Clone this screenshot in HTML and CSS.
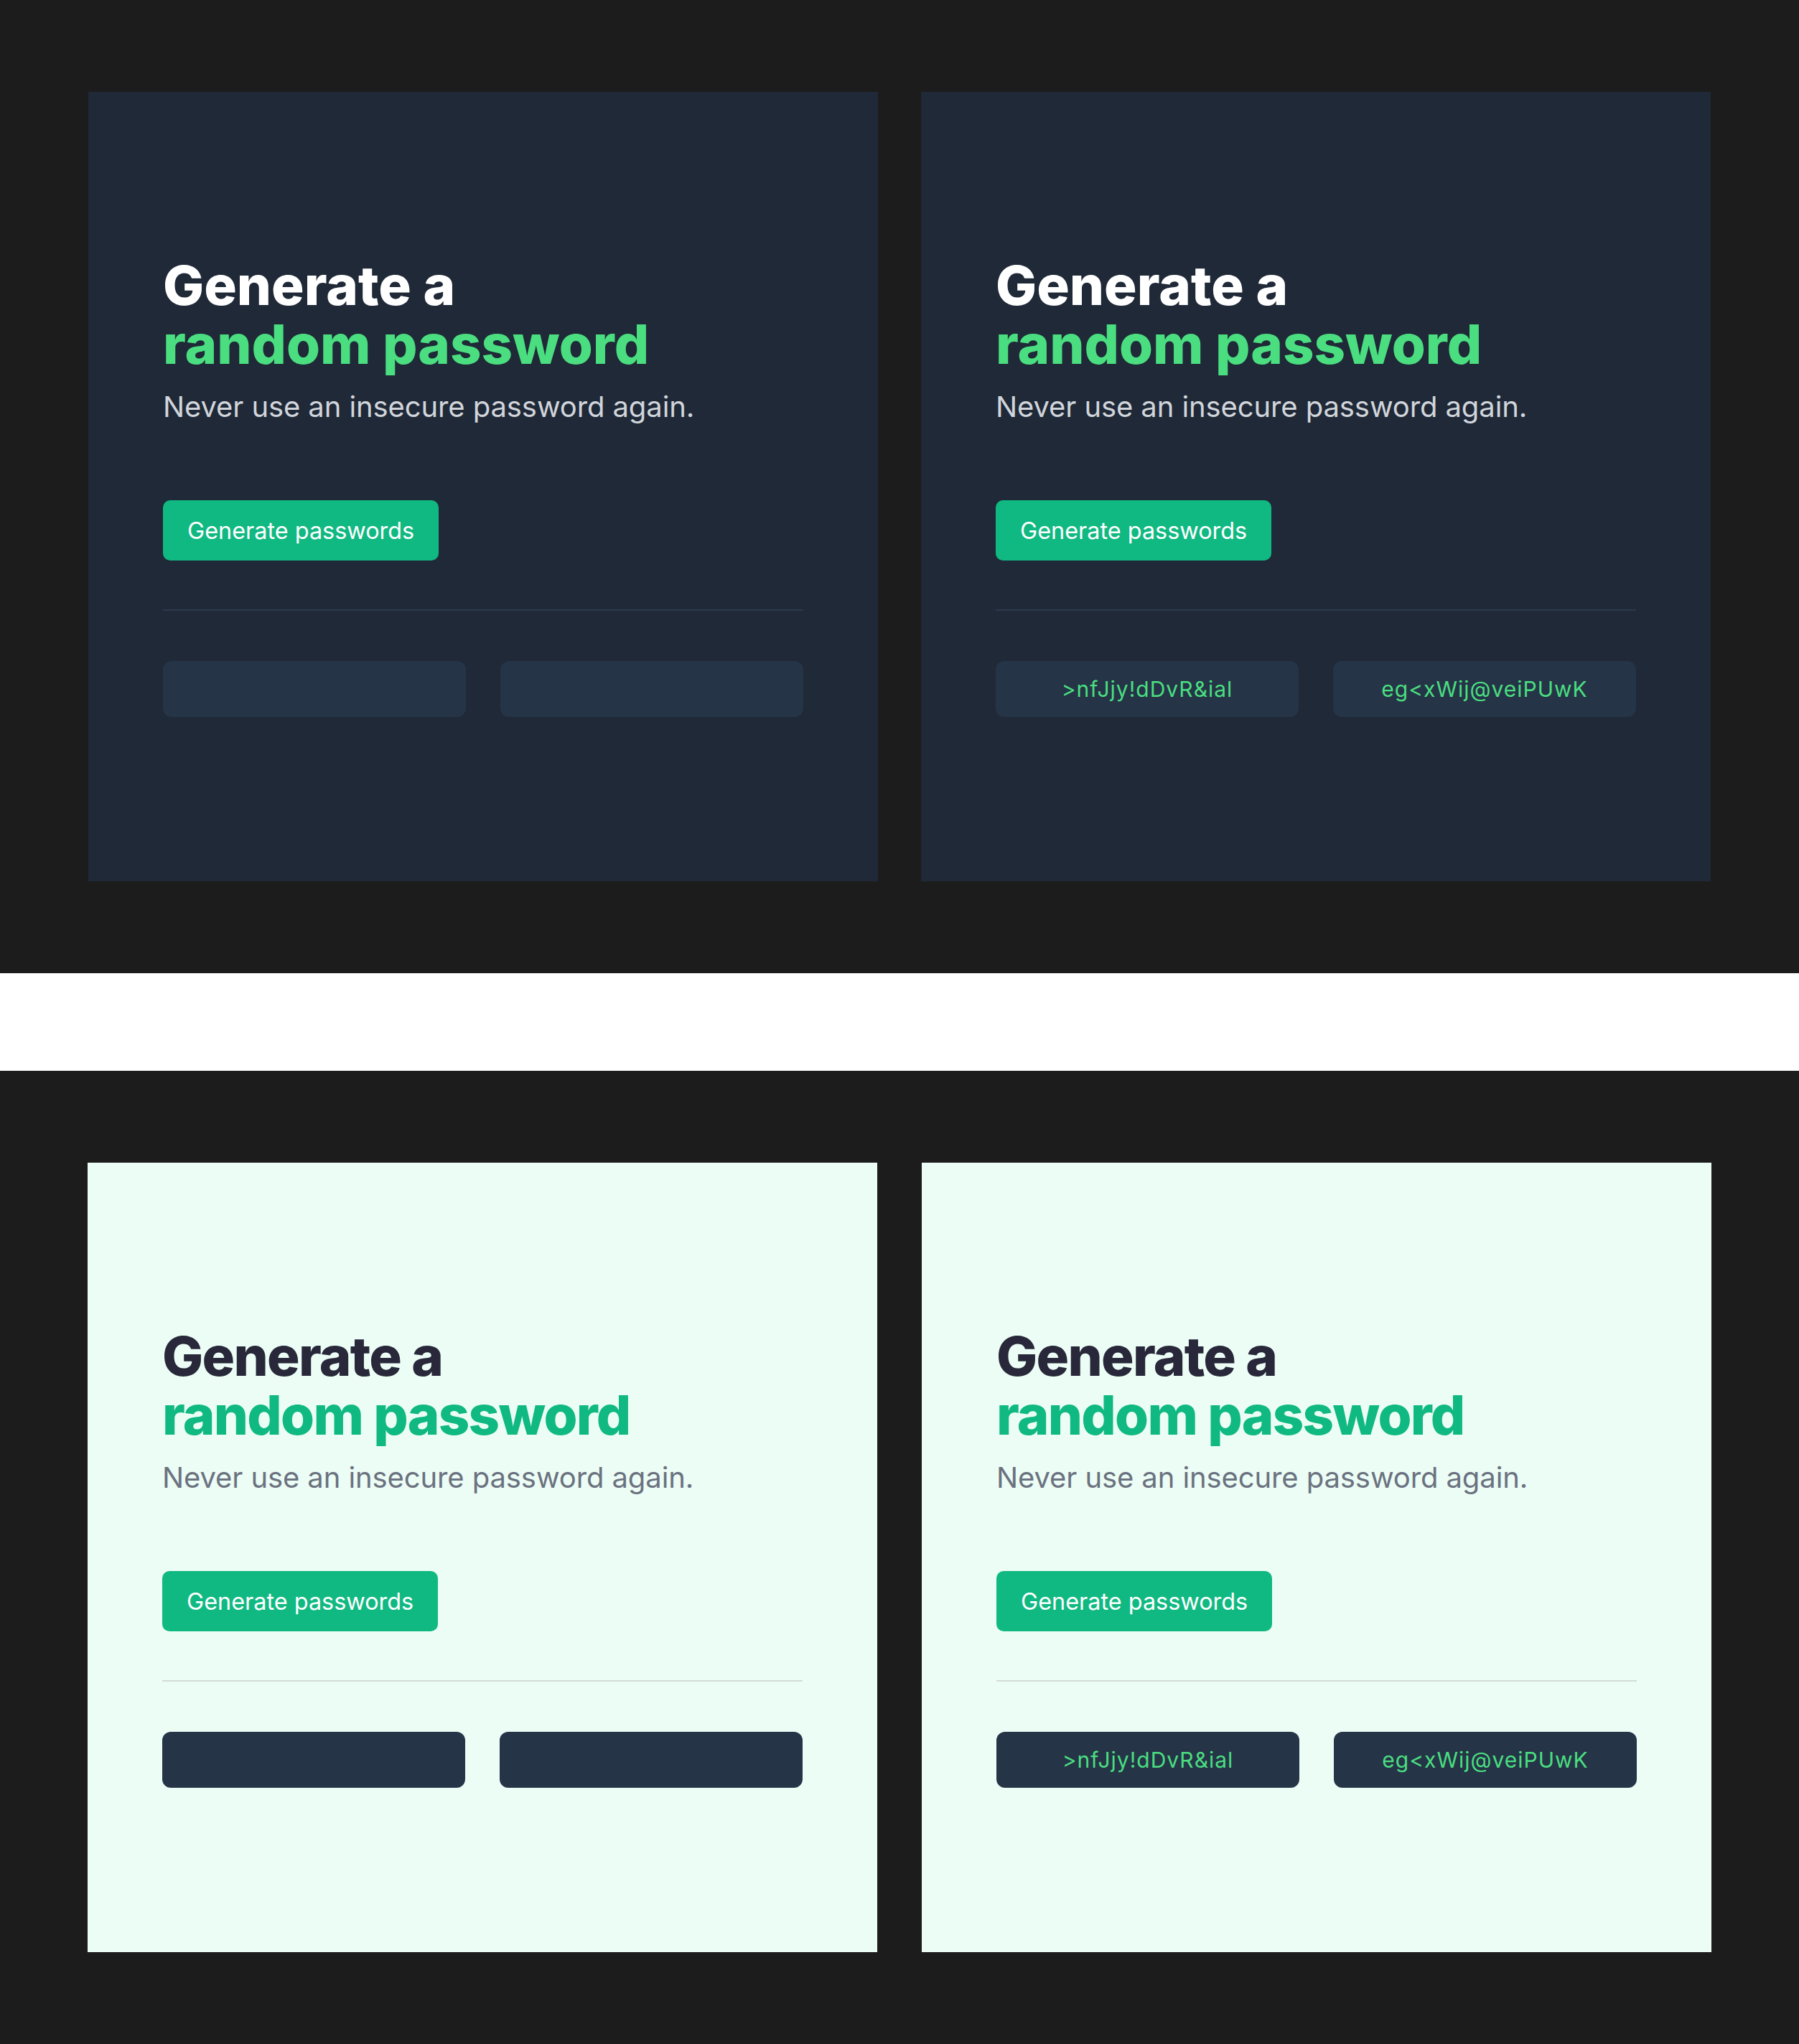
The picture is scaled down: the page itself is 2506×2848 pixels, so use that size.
FILE: index.html
```html
<!DOCTYPE html>
<html lang="en">
<head>
<meta charset="utf-8">
<title>Generate a random password</title>
<link rel="stylesheet" href="styles.css">
</head>
<body>
<section class="stage">
  <div class="card card--dark">
    <h1 class="title"><span class="title-main">Generate a</span><span class="title-accent">random password</span></h1>
    <p class="subtitle">Never use an insecure password again.</p>
    <button class="btn" type="button">Generate passwords</button>
    <hr class="divider">
    <div class="passwords">
      <div class="pw"></div>
      <div class="pw"></div>
    </div>
  </div>
  <div class="card card--dark">
    <h1 class="title"><span class="title-main">Generate a</span><span class="title-accent">random password</span></h1>
    <p class="subtitle">Never use an insecure password again.</p>
    <button class="btn" type="button">Generate passwords</button>
    <hr class="divider">
    <div class="passwords">
      <div class="pw">&gt;nfJjy!dDvR&amp;ial</div>
      <div class="pw">eg&lt;xWij@veiPUwK</div>
    </div>
  </div>
</section>
<div class="spacer"></div>
<section class="stage stage--light">
  <div class="card card--light">
    <h1 class="title"><span class="title-main">Generate a</span><span class="title-accent">random password</span></h1>
    <p class="subtitle">Never use an insecure password again.</p>
    <button class="btn" type="button">Generate passwords</button>
    <hr class="divider">
    <div class="passwords">
      <div class="pw"></div>
      <div class="pw"></div>
    </div>
  </div>
  <div class="card card--light">
    <h1 class="title"><span class="title-main">Generate a</span><span class="title-accent">random password</span></h1>
    <p class="subtitle">Never use an insecure password again.</p>
    <button class="btn" type="button">Generate passwords</button>
    <hr class="divider">
    <div class="passwords">
      <div class="pw">&gt;nfJjy!dDvR&amp;ial</div>
      <div class="pw">eg&lt;xWij@veiPUwK</div>
    </div>
  </div>
</section>
</body>
</html>
```

FILE: styles.css
```css
* {
  box-sizing: border-box;
}

html, body {
  margin: 0;
  padding: 0;
  background: #ffffff;
}

body {
  font-family: Inter, "Noto Sans", "Liberation Sans", sans-serif;
}

.stage {
  display: flex;
  justify-content: center;
  gap: 60px;
  padding: 128px 0;
  background: #1c1c1c;
}

.stage--light {
  gap: 62px;
}

.spacer {
  height: 136px;
  background: #ffffff;
}

.card {
  width: 1100px;
  height: 1100px;
  padding: 228px 104px 0;
  display: flex;
  flex-direction: column;
  align-items: stretch;
}

.card--dark {
  background: #1f2937;
  --title: #ffffff;
  --accent: #4ade80;
  --sub: #d1d5db;
  --rule: #2d3a4d;
  --track: 0px;
}

.card--light {
  background: #ecfdf5;
  --title: #28283a;
  --accent: #10b981;
  --sub: #6b7280;
  --rule: #d3dcd8;
  --track: -1.7px;
}

.title {
  margin: 0;
  font-size: 76px;
  line-height: 82px;
  font-weight: 800;
  letter-spacing: var(--track);
}

.title-main,
.title-accent {
  display: block;
}

.title-main {
  color: var(--title);
}

.title-accent {
  color: var(--accent);
}

.subtitle {
  margin: 19px 0 0;
  font-size: 40px;
  line-height: 56px;
  font-weight: 400;
  letter-spacing: -0.1px;
  color: var(--sub);
}

.btn {
  align-self: flex-start;
  margin-top: 102px;
  height: 84px;
  padding: 0 34px;
  border: 0;
  border-radius: 10px;
  background: #10b981;
  color: #ffffff;
  font-family: inherit;
  font-size: 32.4px;
  font-weight: 400;
}

.divider {
  margin: 68px 0 0;
  height: 2px;
  border: 0;
  background: var(--rule);
}

.passwords {
  margin-top: 70px;
  display: grid;
  grid-template-columns: 1fr 1fr;
  gap: 48px;
}

.pw {
  height: 78px;
  border-radius: 12px;
  background: #253447;
  color: #4ade80;
  font-size: 30px;
  letter-spacing: 1px;
  display: flex;
  align-items: center;
  justify-content: center;
}
```
